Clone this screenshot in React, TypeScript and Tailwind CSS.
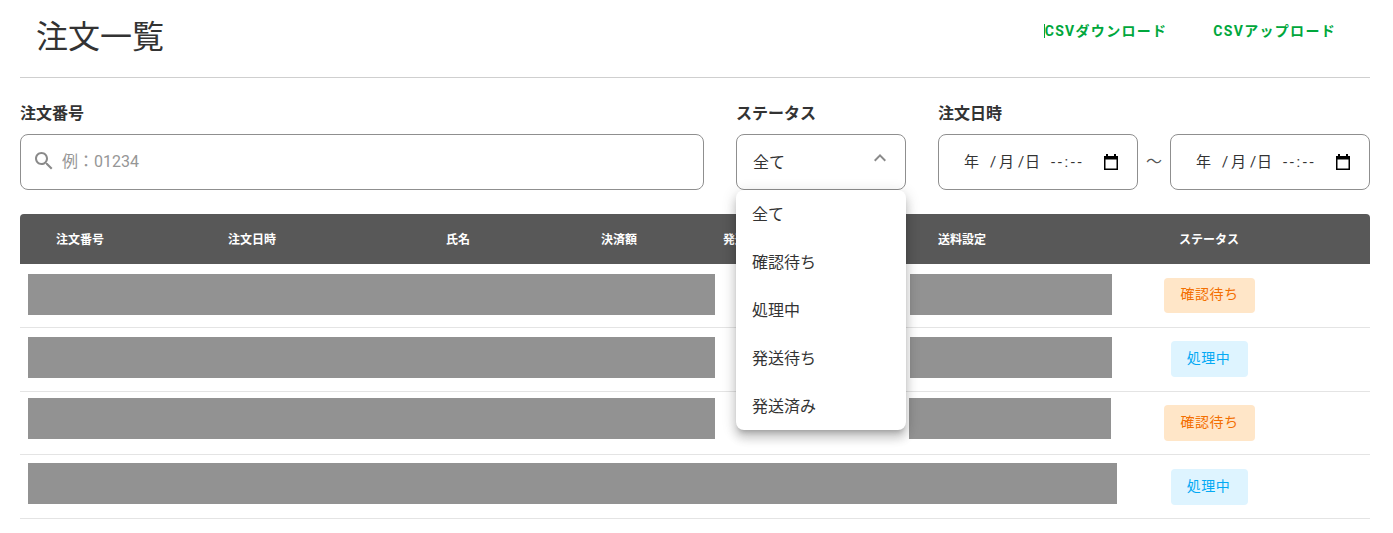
const FONT = 'font-["Roboto","Noto_Sans_CJK_JP",sans-serif]'

const columns = [
  { label: '注文番号', width: 'w-[172px]' },
  { label: '注文日時', width: 'w-[218px]' },
  { label: '氏名', width: 'w-[155px]' },
  { label: '決済額', width: 'w-[122px]' },
  { label: '発送方法', width: 'w-[215px]' },
  { label: '送料設定', width: 'w-[241px]' },
  { label: 'ステータス', width: 'w-[80px]' },
]

const statusOptions = ['全て', '確認待ち', '処理中', '発送待ち', '発送済み']

type Row = {
  height: string
  barTop: string
  pillTop: string
  pillHeight: string
  status: 'confirm' | 'processing'
  kind: 'split' | 'split-left' | 'full'
}

const rows: Row[] = [
  { height: 'h-[64px]', barTop: 'pt-[10px]', pillTop: 'mt-[14px]', pillHeight: 'h-[35px]', status: 'confirm', kind: 'split' },
  { height: 'h-[64px]', barTop: 'pt-[9px]', pillTop: 'mt-[13px]', pillHeight: 'h-[36px]', status: 'processing', kind: 'split' },
  { height: 'h-[63px]', barTop: 'pt-[6px]', pillTop: 'mt-[13px]', pillHeight: 'h-[36px]', status: 'confirm', kind: 'split-left' },
  { height: 'h-[64px]', barTop: 'pt-[8px]', pillTop: 'mt-[14px]', pillHeight: 'h-[36px]', status: 'processing', kind: 'full' },
]

function StatusPill({ row }: { row: Row }) {
  const isConfirm = row.status === 'confirm'
  return (
    <span
      className={`flex items-center justify-center rounded pb-[2px] text-[14px] tracking-[0.5px] ${row.pillTop} ${row.pillHeight} ${
        isConfirm ? 'w-[91px] bg-[#ffe6c8] text-[#f36f00]' : 'w-[77px] bg-[#def4ff] pr-[2px] text-[#03a9f4]'
      }`}
    >
      {isConfirm ? '確認待ち' : '処理中'}
    </span>
  )
}

function DateField() {
  return (
    <div className="flex h-14 w-[200px] items-center rounded-lg border border-[#8f8f8f] pl-[25px] text-[15px] text-[#333]">
      <span className="w-[26px]">年</span>
      <span className="w-[9px]">/</span>
      <span className="w-[19px]">月</span>
      <span className="w-[7px]">/</span>
      <span className="w-[26px]">日</span>
      <span className="w-[53px] text-[15px] tracking-[2.6px]">--:--</span>
      <svg viewBox="0 0 14 16" className="mb-[1px] h-4 w-[14px]" fill="none">
        <path d="M3 0v2M11 0v2" stroke="#000" strokeWidth="2" />
        <path d="M0 2h14v14H0z" fill="#000" />
        <path d="M1.5 5.5h11v9h-11z" fill="#fff" />
      </svg>
    </div>
  )
}

export default function App() {
  return (
    <div className={`relative h-[533px] w-[1393px] overflow-hidden bg-white pl-5 pr-[23px] text-[#333] ${FONT}`}>
      <header className="flex h-[78px] items-start border-b border-[#cfcfcf]">
        <h1 className="ml-4 mt-[14px] text-[32px] leading-[46px] font-normal">注文一覧</h1>
        <div className="ml-auto mr-[34px] mt-[24px] flex gap-[46px] text-[14px] leading-[14px] font-bold tracking-[1.3px] text-[#00a73c]">
          <a className="border-l border-[#00a73c]">CSVダウンロード</a>
          <a>CSVアップロード</a>
        </div>
      </header>

      <section className="mt-[25px] flex gap-8">
        <div className="w-[684px]">
          <label className="block text-[16px] leading-[22px] font-bold">注文番号</label>
          <div className="mt-[9px] flex h-14 items-center rounded-lg border border-[#8f8f8f] pl-[11px]">
            <svg viewBox="0 0 24 24" className="mb-[2px] h-6 w-6 fill-[#8a8a8a]">
              <path d="M15.5 14h-.79l-.28-.27C15.41 12.59 16 11.11 16 9.5 16 5.91 13.09 3 9.5 3S3 5.91 3 9.5 5.91 16 9.5 16c1.61 0 3.09-.59 4.23-1.57l.27.28v.79l5 4.99L20.49 19l-4.99-5zm-6 0C7.01 14 5 11.99 5 9.5S7.01 5 9.5 5 14 7.01 14 9.5 11.99 14 9.5 14z" />
            </svg>
            <input
              placeholder="例：01234"
              className="ml-[6px] flex-1 bg-transparent text-[16px] outline-none placeholder:text-[#969696]"
            />
          </div>
        </div>

        <div className="relative w-[170px]">
          <label className="block text-[16px] leading-[22px] font-bold">ステータス</label>
          <div className="mt-[9px] flex h-14 items-center justify-between rounded-lg border border-[#8f8f8f] pl-4 pr-[13px] text-[16px]">
            <span className="pt-[1px]">全て</span>
            <svg viewBox="0 0 24 24" className="mb-2 h-6 w-6 fill-[#8a8a8a]">
              <path d="M12 8l-6 6 1.41 1.41L12 10.83l4.59 4.58L18 14z" />
            </svg>
          </div>
          <ul className="absolute left-0 top-[87px] z-10 w-[170px] rounded-lg bg-white shadow-[0_5px_5px_-3px_rgba(0,0,0,0.2),0_8px_10px_1px_rgba(0,0,0,0.14),0_3px_14px_2px_rgba(0,0,0,0.12)]">
            {statusOptions.map(option => (
              <li key={option} className="flex h-12 items-center px-4 pt-[1px] text-[16px]">
                {option}
              </li>
            ))}
          </ul>
        </div>

        <div>
          <label className="block text-[16px] leading-[22px] font-bold">注文日時</label>
          <div className="mt-[9px] flex items-center">
            <DateField />
            <span className="w-8 text-center text-[16px] text-[#555]">〜</span>
            <DateField />
          </div>
        </div>
      </section>

      <section className="mt-6">
        <div className="flex h-[50px] items-center rounded-t bg-[#585858] pl-[36px] pt-[2px] text-[12px] font-bold text-white">
          {columns.map(column => (
            <span key={column.label} className={column.width}>
              {column.label}
            </span>
          ))}
        </div>
        {rows.map((row, i) => (
          <div key={i} className={`flex border-b border-[#e4e4e4] ${row.height}`}>
            <div className={`w-[1097px] pl-2 ${row.barTop}`}>
              {row.kind === 'full' ? (
                <div className="h-[41px] w-[1089px] bg-[#929292]" />
              ) : (
                <div className="flex">
                  <div className="h-[41px] w-[687px] bg-[#929292]" />
                  <div className={`h-[41px] w-[202px] bg-[#929292] ${row.kind === 'split' ? 'ml-[195px]' : 'ml-[194px]'}`} />
                </div>
              )}
            </div>
            <div className="flex w-[185px] justify-center items-start">
              <StatusPill row={row} />
            </div>
          </div>
        ))}
      </section>
    </div>
  )
}
